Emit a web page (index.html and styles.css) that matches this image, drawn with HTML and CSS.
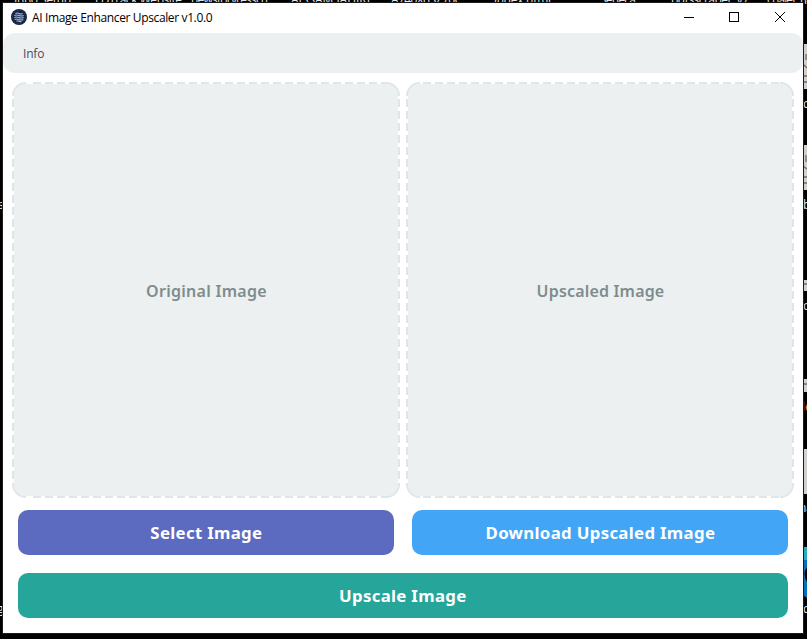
FILE: index.html
```html
<!DOCTYPE html>
<html lang="en">
<head>
<meta charset="utf-8">
<title>AI Image Enhancer Upscaler v1.0.0</title>
<link rel="stylesheet" href="styles.css">
</head>
<body>
<svg class="desktop" width="807" height="639" aria-hidden="true">
  <g class="labels">
    <text x="14" y="4" textLength="57">Inno Setup</text>
    <text x="95" y="4" textLength="87">FDTrack Website</text>
    <text x="191" y="4" textLength="77">newstoryresscri</text>
    <text x="291" y="4" textLength="79">AISSAM JAHIRI</text>
    <text x="391" y="4" textLength="71">A740X63Z70C</text>
    <text x="494" y="4" textLength="57">index.html</text>
    <text x="600" y="4" textLength="36">Seneca</text>
    <text x="671" y="4" textLength="78">pdtsscraper_v7</text>
    <text x="767" y="4" textLength="50">chalet_ma</text>
    <text x="-2" y="209">s</text>
    <text x="-3" y="613">g</text>
    <text x="803" y="108">c</text>
    <text x="803" y="209">b</text>
    <text x="803" y="310">o</text>
    <text x="802" y="411" fill="#d98c50">le</text>
    <text x="799" y="512">na</text>
    <text x="803" y="613">c</text>
  </g>
  <g fill="#d3cfcc">
    <path d="M803 44h4v45h-4zM803 145h4v45h-4zM803 280h4v11h-4zM803 379h4v13h-4zM803 449h4v45h-4z"/>
    <path d="M803 64l4 4M803 76h4M803 82h4M806 54v6M803 166l4 3M803 177h4M803 183h4M806 155v7M804 284h3M804 384h3" fill="none" stroke="#796a60" stroke-width="1.3"/>
  </g>
  <path d="M803 547h4v13h-4z" fill="#2aa9bd"/>
  <path d="M803 560h4v38l-4-3z" fill="#0870b8"/>
  <path d="M807 567q-5 7 0 15z" fill="#000"/>
</svg>
<main class="window">
  <header class="titlebar">
    <svg class="logo" width="16" height="16" viewBox="0 0 16 16">
      <circle cx="8" cy="8" r="8" fill="#15203c"/>
      <circle cx="8" cy="8" r="6.6" fill="none" stroke="#2b3b5f" stroke-width=".6"/>
      <path d="M4.4 4.500q1.800-1 3.600 0t3.600 0M3.300 6.500q2.300-1 4.700 0t4.700 0M3.300 8.500q2.300-1 4.700 0t4.700 0M3.600 10.500q2.200-1 4.400 0t4.400 0M5.500 12.300q1.200-.8 2.500 0t2.500 0" fill="none" stroke="#9dbde8" stroke-width="1.150"/>
    </svg>
    <h1 class="title">AI Image Enhancer Upscaler v1.0.0</h1>
    <svg class="controls" width="138" height="30" viewBox="0 0 138 30" fill="none" stroke="#000" shape-rendering="crispEdges">
      <path d="M19 14.5h10"/>
      <rect x="64.500" y="9.500" width="9" height="9"/>
      <path d="M110 9l10 10M120 9l-10 10" shape-rendering="auto"/>
    </svg>
  </header>
  <nav class="menubar"><span class="menu-item">Info</span></nav>
  <div class="content">
    <div class="panels">
      <section class="panel">
        <svg class="outline" width="388" height="416" viewBox="0 0 388 416">
          <path d="M1 14A13 13 0 0 1 14 1M374 1A13 13 0 0 1 387 14M387 402A13 13 0 0 1 374 415M14 415A13 13 0 0 1 1 402"/>
          <path class="dashes" d="M21 1H374M21 415H374M1 17V402M387 17V402"/>
        </svg>
        <span class="caption original">Original Image</span>
      </section>
      <section class="panel">
        <svg class="outline" width="388" height="416" viewBox="0 0 388 416">
          <path d="M1 14A13 13 0 0 1 14 1M374 1A13 13 0 0 1 387 14M387 402A13 13 0 0 1 374 415M14 415A13 13 0 0 1 1 402"/>
          <path class="dashes" d="M17 1H374M17 415H374M1 17V402M387 17V402"/>
        </svg>
        <span class="caption upscaled">Upscaled Image</span>
      </section>
    </div>
    <div class="actions">
      <button class="button select"><span class="label">Select Image</span></button>
      <button class="button download"><span class="label">Download Upscaled Image</span></button>
      <button class="button upscale"><span class="label">Upscale Image</span></button>
    </div>
  </div>
</main>
</body>
</html>
```
FILE: styles.css
```css
* { box-sizing: border-box; }

body {
  margin: 0;
  width: 807px;
  height: 639px;
  padding: 3px 4px 6px 3px;
  overflow: hidden;
  background: #000;
  font-family: "Open Sans", sans-serif;
}

.desktop {
  position: absolute;
  top: 0;
  left: 0;
}

.labels {
  fill: #e8e8e8;
  font: 12px "Open Sans", sans-serif;
}

.window {
  position: relative;
  width: 800px;
  height: 630px;
  background: #fff;
  box-shadow: 0 0 0 1px #1c1c1c;
}

.titlebar {
  display: flex;
  align-items: center;
  height: 30px;
  padding-left: 8px;
}

.logo { margin-top: -2px; }

.title {
  margin: -2px 0 0 5px;
  font-size: 12px;
  font-weight: 400;
  letter-spacing: -0.37px;
  white-space: nowrap;
  color: #000;
}

.controls { margin-left: auto; }

.menubar {
  display: flex;
  align-items: center;
  height: 40px;
  padding: 0 20px;
  border-radius: 12px;
  background: #ecf0f1;
}

.menu-item {
  font-size: 12px;
  letter-spacing: -0.2px;
  color: #4a4a5e;
}

.content { padding: 9px 9px 0; }

.panels {
  display: flex;
  gap: 6px;
}

.panel {
  position: relative;
  display: flex;
  align-items: center;
  justify-content: center;
  width: 388px;
  height: 416px;
  padding: 2px 0 0 1px;
  border: 2px solid transparent;
  border-radius: 14px;
  background: #ecf0f1 padding-box;
}

.outline {
  position: absolute;
  top: -2px;
  left: -2px;
  fill: none;
  stroke: #dfe6e9;
  stroke-width: 2;
}

.dashes { stroke-dasharray: 8 4; }

.caption {
  font: 600 16px "Noto Sans", sans-serif;
  white-space: nowrap;
  color: #7f8c8d;
}

.original { letter-spacing: 0.28px; }
.upscaled { letter-spacing: 0.18px; }

.actions {
  display: grid;
  grid-template-columns: 376px 376px;
  gap: 18px;
  padding: 12px 6px 0;
}

.button {
  height: 45px;
  padding: 0;
  border: 0;
  border-radius: 10px;
  font: 700 16px "Noto Sans", sans-serif;
  letter-spacing: 0.3px;
  color: #fff;
}

.label {
  display: inline-block;
  transform: scaleX(1.05);
}

.select { background: #5c6bc0; }
.download { background: #42a5f5; }

.upscale {
  grid-column: 1 / -1;
  background: #26a69a;
}
```
